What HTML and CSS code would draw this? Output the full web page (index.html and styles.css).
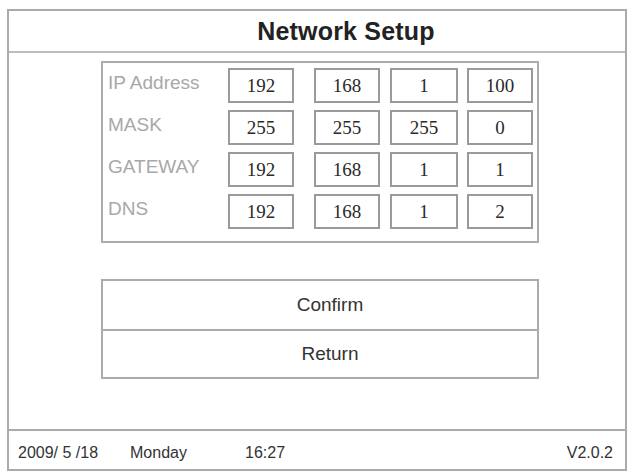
FILE: index.html
```html
<!DOCTYPE html>
<html lang="en">
<head>
  <meta charset="UTF-8" />
  <title>Network Setup</title>
  <link rel="stylesheet" href="styles.css">
</head>
<body>
  <div class="screen">
    <div class="header">
      <h1>Network Setup</h1>
    </div>

    <div class="main">
      <!-- address table: label + four octets per row -->
      <div class="panel">
        <div class="row">
          <span class="label">IP Address</span>
          <span class="cell">192</span>
          <span class="cell">168</span>
          <span class="cell">1</span>
          <span class="cell">100</span>
        </div>
        <div class="row">
          <span class="label">MASK</span>
          <span class="cell">255</span>
          <span class="cell">255</span>
          <span class="cell">255</span>
          <span class="cell">0</span>
        </div>
        <div class="row">
          <span class="label">GATEWAY</span>
          <span class="cell">192</span>
          <span class="cell">168</span>
          <span class="cell">1</span>
          <span class="cell">1</span>
        </div>
        <div class="row">
          <span class="label">DNS</span>
          <span class="cell">192</span>
          <span class="cell">168</span>
          <span class="cell">1</span>
          <span class="cell">2</span>
        </div>
      </div>

      <div class="actions">
        <button class="btn">Confirm</button>
        <button class="btn">Return</button>
      </div>
    </div>

    <div class="footer">
      <span class="date">2009/ 5 /18</span>
      <span class="day">Monday</span>
      <span class="time">16:27</span>
      <span class="version">V2.0.2</span>
    </div>
  </div>
</body>
</html>
```

FILE: styles.css
```css
:root {
  --line: #ababab;
  --cell-line: #9a9a9a;
  --text: #333;
  --label: #a8a8a8;
}

* {
  box-sizing: border-box;
  margin: 0;
  padding: 0;
}

body {
  background: #fff;
  font-family: 'Liberation Sans', Arial, sans-serif;
  color: var(--text);
}

.screen {
  margin: 9px 0 0 7px;
  width: 620px;
  height: 462px;
  border: 2px solid var(--line);
  display: flex;
  flex-direction: column;
}

.header {
  height: 42px;
  border-bottom: 2px solid #bdbdbd;
  display: flex;
  align-items: center;
  justify-content: center;
  padding-left: 58px;
}

h1 {
  font-size: 25px;
  font-weight: 700;
  color: #222;
  letter-spacing: 0.2px;
}

.main {
  flex: 1;
  padding: 8px 0 0 92px;
}

.panel {
  width: 438px;
  height: 182px;
  border: 2px solid var(--line);
  padding: 5px 0 0 4px;
  display: flex;
  flex-direction: column;
  gap: 6px;
}

.row {
  display: flex;
  height: 36px;
}

.label {
  width: 121px;
  padding: 4px 0 0 1px;
  font-size: 19px;
  color: var(--label);
}

.cell {
  width: 66px;
  height: 35px;
  border: 2px solid var(--cell-line);
  display: flex;
  align-items: center;
  justify-content: center;
  font-family: 'Liberation Serif', 'Times New Roman', serif;
  font-size: 19px;
  color: #2a2a2a;
}

.cell:nth-child(3) { margin-left: 20px; }
.cell:nth-child(4) { margin-left: 10px; width: 68px; }
.cell:nth-child(5) { margin-left: 9px; }

.actions {
  margin-top: 36px;
  width: 438px;
  border: 2px solid var(--line);
  display: flex;
  flex-direction: column;
}

.btn {
  height: 48px;
  background: #fff;
  border: none;
  font-family: 'Liberation Sans', Arial, sans-serif;
  font-size: 19px;
  color: #333;
  padding-left: 20px;
}

.btn + .btn {
  border-top: 2px solid var(--line);
}

.footer {
  height: 40px;
  border-top: 2px solid var(--line);
  display: flex;
  align-items: center;
  padding: 6px 12px 0 9px;
  font-size: 16px;
  color: #333;
}

.date { width: 112px; }
.day { width: 115px; }
.version { margin-left: auto; }
```
